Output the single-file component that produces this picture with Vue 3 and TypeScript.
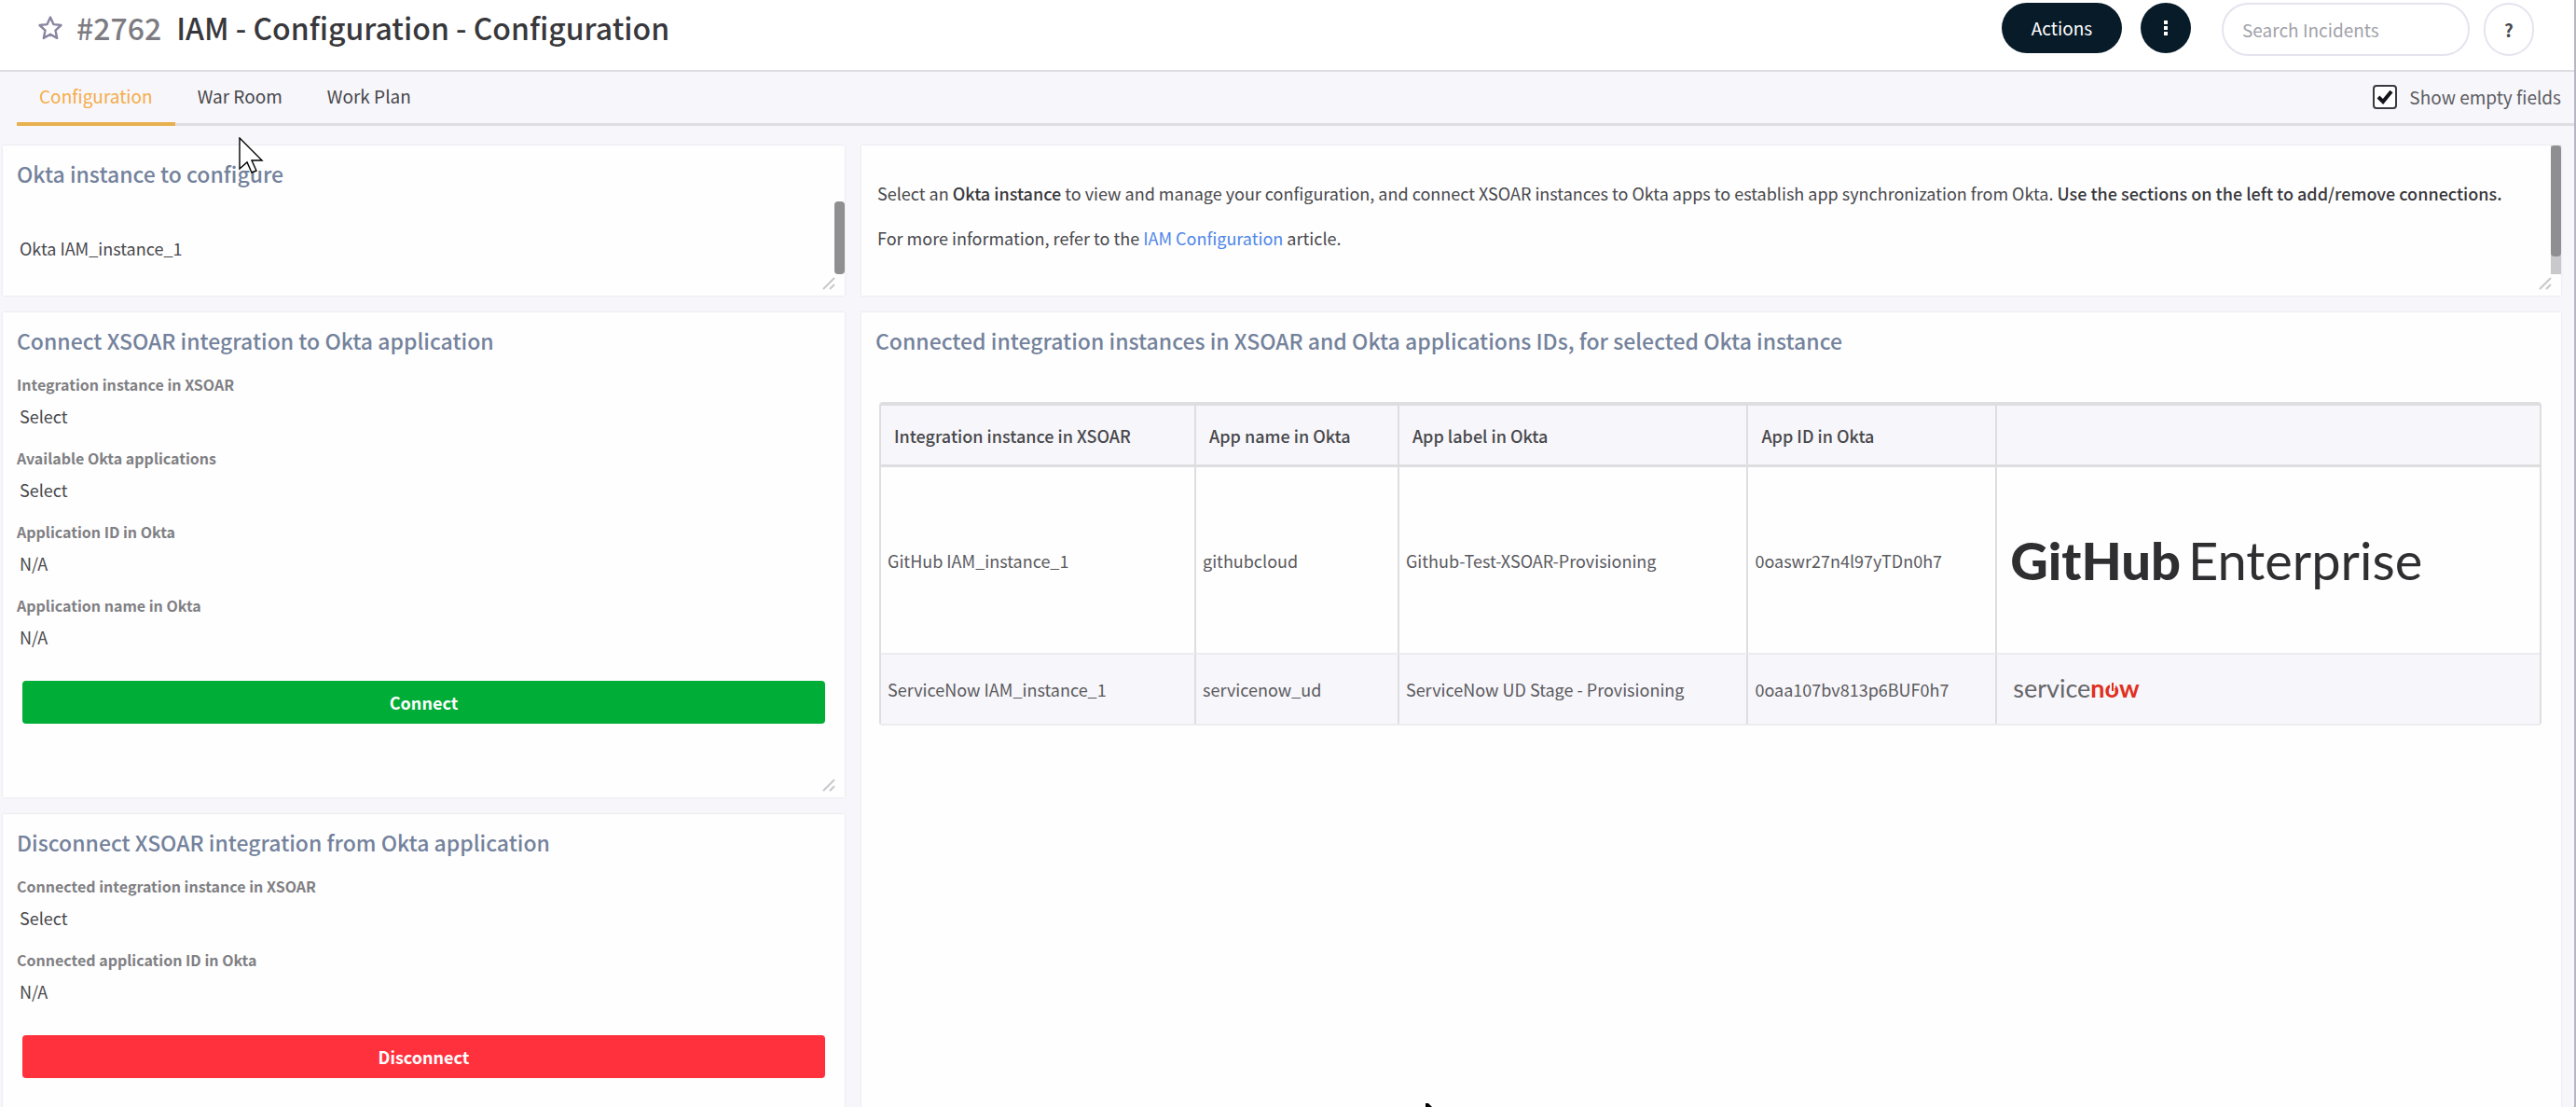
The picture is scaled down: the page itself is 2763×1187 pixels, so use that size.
<script setup lang="ts">
import { ref } from 'vue'

interface Field {
  id: string
  label: string
  kind: 'select' | 'text'
  value: string
}

interface Row {
  instance: string
  name: string
  label: string
  id: string
  logo: 'github' | 'servicenow'
}

const tabs = ['Configuration', 'War Room', 'Work Plan']
const activeTab = ref('Configuration')
const showEmpty = ref(true)
const search = ref('')

const connectFields: Field[] = [
  { id: 'integration', label: 'Integration instance in XSOAR', kind: 'select', value: 'Select' },
  { id: 'available', label: 'Available Okta applications', kind: 'select', value: 'Select' },
  { id: 'app-id', label: 'Application ID in Okta', kind: 'text', value: 'N/A' },
  { id: 'app-name', label: 'Application name in Okta', kind: 'text', value: 'N/A' },
]

const disconnectFields: Field[] = [
  { id: 'connected-integration', label: 'Connected integration instance in XSOAR', kind: 'select', value: 'Select' },
  { id: 'connected-app', label: 'Connected application ID in Okta', kind: 'text', value: 'N/A' },
]

const columns = ['Integration instance in XSOAR', 'App name in Okta', 'App label in Okta', 'App ID in Okta', '']

const rows: Row[] = [
  {
    instance: 'GitHub IAM_instance_1',
    name: 'githubcloud',
    label: 'Github-Test-XSOAR-Provisioning',
    id: '0oaswr27n4l97yTDn0h7',
    logo: 'github',
  },
  {
    instance: 'ServiceNow IAM_instance_1',
    name: 'servicenow_ud',
    label: 'ServiceNow UD Stage - Provisioning',
    id: '0oaa107bv813p6BUF0h7',
    logo: 'servicenow',
  },
]
</script>

<template>
  <div class="page">
    <header class="header">
      <button class="star" type="button" aria-label="Favourite">
        <svg width="28" height="28" viewBox="0 0 28 28" fill="none" stroke="#8886a0" stroke-width="2.4" stroke-linejoin="round">
          <path d="M14 2.5l3.4 7.6 8.1.9-6 5.6 1.7 8.3-7.2-4.2-7.2 4.2 1.7-8.3-6-5.6 8.1-.9z" />
        </svg>
      </button>
      <h1 class="title"><span class="number">#2762</span>IAM - Configuration - Configuration</h1>
      <div class="tools">
        <button class="pill actions" type="button">Actions</button>
        <button class="pill more" type="button" aria-label="More">
          <svg width="6" height="20" viewBox="0 0 6 20" fill="#fff">
            <rect x="1" y="2" width="4" height="4" /><rect x="1" y="8" width="4" height="4" /><rect x="1" y="14" width="4" height="4" />
          </svg>
        </button>
        <input v-model="search" class="search" type="text" placeholder="Search Incidents" aria-label="Search Incidents" />
        <button class="help" type="button">?</button>
      </div>
    </header>

    <div class="tabbar">
      <nav class="tabs">
        <button
          v-for="tab in tabs"
          :key="tab"
          type="button"
          class="tab"
          :class="{ active: tab === activeTab }"
          @click="activeTab = tab"
        >{{ tab }}</button>
      </nav>
      <label class="toggle">
        <input v-model="showEmpty" type="checkbox" />
        <span class="box">
          <svg v-if="showEmpty" width="18" height="16" viewBox="0 0 18 16" fill="none" stroke="#14141a" stroke-width="4">
            <path d="M2 8l5 5L16 2" />
          </svg>
        </span>
        Show empty fields
      </label>
    </div>

    <main class="content">
      <div class="column">
        <section class="panel short">
          <h2><label for="okta">Okta instance to configure</label></h2>
          <select id="okta" class="value okta"><option>Okta IAM_instance_1</option></select>
          <span class="scroll left"><i></i></span>
          <svg class="grip" width="14" height="14" viewBox="0 0 14 14" stroke="#c8c8cc" stroke-width="2"><path d="M1 13L13 1M8 13l5-5" /></svg>
        </section>

        <section class="panel connect">
          <h2>Connect XSOAR integration to Okta application</h2>
          <div v-for="f in connectFields" :key="f.id" class="field">
            <label :for="f.id">{{ f.label }}</label>
            <select v-if="f.kind === 'select'" :id="f.id" class="value"><option>{{ f.value }}</option></select>
            <output v-else :id="f.id" class="value">{{ f.value }}</output>
          </div>
          <button class="wide green" type="button">Connect</button>
          <svg class="grip" width="14" height="14" viewBox="0 0 14 14" stroke="#c8c8cc" stroke-width="2"><path d="M1 13L13 1M8 13l5-5" /></svg>
        </section>

        <section class="panel fill">
          <h2>Disconnect XSOAR integration from Okta application</h2>
          <div v-for="f in disconnectFields" :key="f.id" class="field">
            <label :for="f.id">{{ f.label }}</label>
            <select v-if="f.kind === 'select'" :id="f.id" class="value"><option>{{ f.value }}</option></select>
            <output v-else :id="f.id" class="value">{{ f.value }}</output>
          </div>
          <button class="wide red" type="button">Disconnect</button>
        </section>
      </div>

      <div class="column">
        <section class="panel short info">
          <p>
            Select an <b>Okta instance</b> to view and manage your configuration, and connect XSOAR instances to Okta apps to
            establish app synchronization from Okta. <b>Use the sections on the left to add/remove connections.</b>
          </p>
          <p>For more information, refer to the <a href="#">IAM Configuration</a> article.</p>
          <span class="scroll right"><i></i></span>
          <svg class="grip" width="14" height="14" viewBox="0 0 14 14" stroke="#c8c8cc" stroke-width="2"><path d="M1 13L13 1M8 13l5-5" /></svg>
        </section>

        <section class="panel fill instances">
          <h2>Connected integration instances in XSOAR and Okta applications IDs, for selected Okta instance</h2>
          <table>
            <colgroup><col class="c1" /><col class="c2" /><col class="c3" /><col class="c4" /><col /></colgroup>
            <thead>
              <tr><th v-for="(c, i) in columns" :key="i" scope="col">{{ c }}</th></tr>
            </thead>
            <tbody>
              <tr v-for="row in rows" :key="row.id" :class="row.logo">
                <td>{{ row.instance }}</td>
                <td>{{ row.name }}</td>
                <td>{{ row.label }}</td>
                <td>{{ row.id }}</td>
                <td class="logo-cell">
                  <span v-if="row.logo === 'github'" class="logo-github"><b>GitHub</b><span>Enterprise</span></span>
                  <span v-else class="logo-servicenow">service<b>n<span class="power">o<svg viewBox="0 0 16 16" width="16" height="16"><path d="M8 0v6" stroke="#f7f6fa" stroke-width="6" /><path d="M8 0v9" stroke="#e0301e" stroke-width="2" /></svg></span>w</b></span>
                </td>
              </tr>
            </tbody>
          </table>
        </section>
      </div>
    </main>

    <svg class="pointer" width="28" height="42" viewBox="0 0 28 42" fill="#fff" stroke="#000" stroke-width="1.4">
      <path d="M1 1v33l8-7 5 11 5-2-5-11h11z" />
    </svg>
    <svg class="pointer-tip" width="8" height="4" viewBox="0 0 8 4"><path d="M1 0h3l4 4H1z" fill="#000" /></svg>
  </div>
</template>

<style>
body {
  margin: 0;
  background: #f7f6fa;
}
</style>

<style scoped>
.page {
  position: relative;
  box-sizing: border-box;
  display: flex;
  flex-direction: column;
  min-height: 100vh;
  overflow: hidden;
  border-right: 2px solid #b9b6c3;
  background: #f7f6fa;
  color: #48484c;
  font-family: "Noto Sans CJK SC", "Noto Sans", sans-serif;
  font-size: 18px;
  line-height: 28px;
}
.page * {
  box-sizing: border-box;
}
button,
input,
select {
  margin: 0;
  padding: 0;
  border: 0;
  background: none;
  color: inherit;
  font: inherit;
}
h1,
h2,
p {
  margin: 0;
}

.header {
  display: flex;
  align-items: flex-start;
  height: 77px;
  padding: 3px 43px 0 40px;
  border-bottom: 2px solid #dedee2;
  background: #fff;
  font-size: 19px;
}
.star {
  display: flex;
  padding-top: 13px;
}
.title {
  flex: 1;
  padding-left: 14px;
  color: #38383c;
  font-size: 32px;
  font-weight: 500;
  line-height: 52px;
}
.number {
  margin-right: 16px;
  color: #7c7c82;
}
.tools {
  display: flex;
  align-items: flex-start;
}
.pill {
  display: flex;
  align-items: center;
  justify-content: center;
  height: 54px;
  border-radius: 27px;
  background: #081b29;
  color: #fff;
}
.actions {
  width: 129px;
}
.more {
  width: 54px;
  margin-left: 20px;
}
.search {
  width: 266px;
  height: 57px;
  margin-left: 33px;
  padding: 0 20px;
  border: 2px solid #e4e4ee;
  border-radius: 29px;
}
.search::placeholder {
  color: #a2a2aa;
  opacity: 1;
}
.help {
  width: 54px;
  height: 57px;
  margin-left: 15px;
  border: 2px solid #e4e4ee;
  border-radius: 27px;
  font-weight: 700;
}

.tabbar {
  display: flex;
  justify-content: space-between;
  height: 58px;
  margin-left: 18px;
  padding-right: 14px;
  border-bottom: 3px solid #dedee2;
  font-size: 19px;
}
.tabs {
  display: flex;
}
.tab {
  height: 58px;
  padding: 0 24px 2px;
  border-bottom: 4px solid transparent;
}
.tab.active {
  border-bottom-color: #e8b04e;
  color: #f5ac48;
}
.toggle {
  display: flex;
  align-items: center;
  padding-bottom: 2px;
  color: #5c5c62;
}
.toggle input {
  position: absolute;
  width: 26px;
  height: 26px;
  opacity: 0;
}
.box {
  display: flex;
  align-items: center;
  justify-content: center;
  width: 26px;
  height: 26px;
  margin-right: 13px;
  border: 2px solid #3a3a40;
  border-radius: 4px;
  background: #fff;
}

.content {
  display: grid;
  flex: 1;
  grid-template-columns: 903fr 1823fr;
  gap: 18px;
  padding: 21px 14px 0 3px;
}
.column {
  display: flex;
  flex-direction: column;
  gap: 18px;
}
.panel {
  position: relative;
  padding: 14px 21px 0 15px;
  background: #fefefe;
  box-shadow: 0 0 2px #dcdce2;
}
.short {
  height: 161px;
}
.connect {
  padding-bottom: 79px;
}
.fill {
  flex: 1;
}
h2 {
  color: #74829c;
  font-size: 23px;
  font-weight: 500;
  line-height: 32px;
}
.value {
  display: block;
  width: 100%;
  height: 28px;
  padding-left: 3px;
  appearance: none;
}
.okta {
  margin-top: 50px;
}
.field {
  padding-top: 17px;
}
.field label {
  display: block;
  margin-bottom: 6px;
  color: #808084;
  font-size: 16px;
  font-weight: 700;
}
.wide {
  display: block;
  width: calc(100% - 6px);
  height: 46px;
  margin: 33px 0 0 6px;
  border-radius: 4px;
  color: #fff;
  font-weight: 700;
}
.green {
  background: #00ad37;
}
.red {
  background: #ff313d;
}
.grip {
  position: absolute;
  right: 10px;
  bottom: 6px;
}
.scroll {
  position: absolute;
  right: 0;
  width: 11px;
}
.scroll i {
  display: block;
  border-radius: 4px;
  background: #8f8f92;
}
.scroll.left {
  top: 60px;
}
.scroll.left i {
  height: 78px;
}
.scroll.right {
  top: 0;
  height: 138px;
  background: #c9c9cc;
}
.scroll.right i {
  height: 119px;
}

.info {
  padding: 37px 24px 0 17px;
}
.info p {
  margin-bottom: 20px;
}
.info b {
  color: #38383c;
  font-weight: 500;
}
.info a {
  color: #4f86e8;
  text-decoration: none;
}

.instances {
  padding-right: 21px;
}
table {
  width: calc(100% - 4px);
  margin: 50px 0 0 4px;
  border: 2px solid #dedee0;
  border-top-width: 4px;
  border-bottom-color: #ececf0;
  border-radius: 4px;
  border-spacing: 0;
  table-layout: fixed;
}
.c1 {
  width: 19%;
}
.c2 {
  width: 12.25%;
}
.c3 {
  width: 21.05%;
}
.c4 {
  width: 15%;
}
th,
td {
  padding: 0 7px;
  border-right: 2px solid #dedee0;
  text-align: left;
  white-space: nowrap;
}
th:last-child,
td:last-child {
  border-right: 0;
}
th {
  height: 66px;
  padding-left: 14px;
  border-bottom: 3px solid #dedee0;
  background: #f7f6fa;
  font-weight: 500;
}
td {
  color: #5a5a5e;
}
.github td {
  height: 201px;
  border-bottom: 2px solid #ececf0;
}
.servicenow td {
  height: 74px;
  background: #f7f6fa;
}
td.logo-cell {
  padding-left: 14px;
}
.logo-github {
  display: flex;
  gap: 8px;
  color: #2f2f31;
  font-family: Lato, sans-serif;
  font-size: 56px;
  line-height: 72px;
}
.logo-github b {
  font-weight: 900;
}
.logo-servicenow {
  padding-left: 3px;
  color: #66666a;
  font-family: Lato, sans-serif;
  font-size: 27px;
}
.logo-servicenow b {
  color: #e0301e;
  font-weight: 700;
}
.power {
  position: relative;
}
.power svg {
  position: absolute;
  top: 11px;
  left: 0;
}
.pointer {
  position: absolute;
  top: 147px;
  left: 256px;
}
.pointer-tip {
  position: absolute;
  bottom: 0;
  left: 1528px;
}
</style>
